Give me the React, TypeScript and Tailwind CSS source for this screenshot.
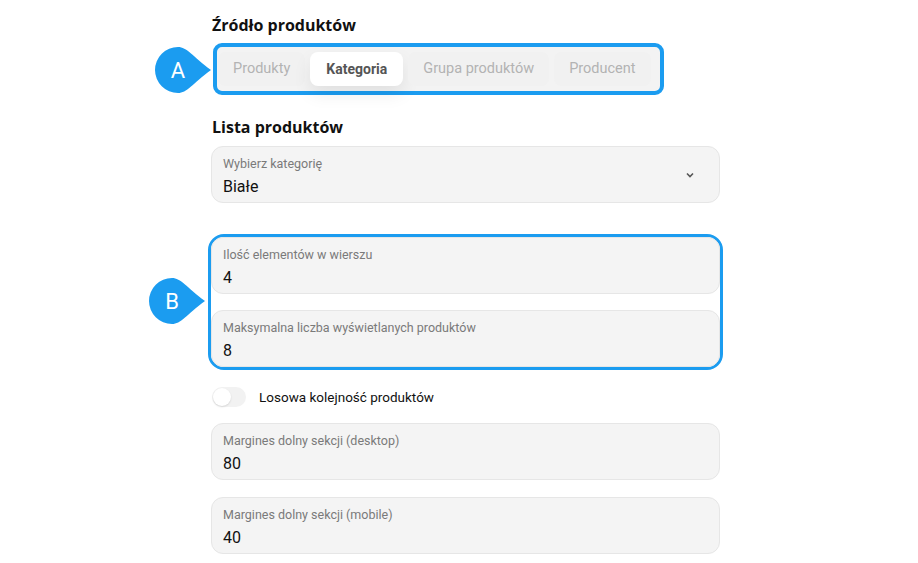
import type { ReactNode } from 'react'

const font = { fontFamily: 'Roboto, "Liberation Sans", sans-serif' }
const headingFont = { fontFamily: '"Open Sans", "Liberation Sans", sans-serif' }

function Badge({ letter }: { letter: string }) {
  return (
    <div className="relative h-[46px] w-[56px]">
      <svg width="56" height="46" viewBox="0 0 56 46" className="absolute inset-0">
        <path
          d="M23 0 C32 0 37 9 56 23 C37 37 32 46 23 46 A23 23 0 0 1 23 0 Z"
          fill="#1b9cf0"
        />
      </svg>
      <span className="absolute left-0 top-0 flex h-[46px] w-[46px] items-center justify-center text-[22px] text-white">
        {letter}
      </span>
    </div>
  )
}

function Field({ label, value, children }: { label: string; value: string; children?: ReactNode }) {
  return (
    <div className="flex h-[57px] items-start rounded-[12px] border border-[#e6e6e6] bg-[#f4f4f4] pl-[11px] pr-3 pt-[9px]">
      <div className="flex-1">
        <div className="text-[12.5px] leading-[16px] text-[#7a7a7a]">{label}</div>
        <div className="mt-[5px] text-[16px] leading-[20px] text-[#111]">{value}</div>
      </div>
      {children}
    </div>
  )
}

export default function App() {
  const tabs = ['Produkty', 'Kategoria', 'Grupa produktów', 'Producent']

  return (
    <div className="min-h-[563px] bg-white" style={font}>
      <div className="ml-[211px] w-[509px] pt-[15px]">
        <h2 className="pl-px text-[16px] font-bold leading-[20px] text-[#111]" style={headingFont}>
          Źródło produktów
        </h2>

        {/* Tabs with marker A */}
        <div className="relative mt-[8px]">
          <div className="absolute left-[-56px] top-[4px]">
            <Badge letter="A" />
          </div>
          <div className="ml-[2px] inline-flex h-[52px] w-[451px] items-center gap-[5px] rounded-[9px] border-4 border-[#1b9cf0] bg-[#f3f3f3] px-[1px]">
            {tabs.map((t) => (
              <div
                key={t}
                className={
                  t === 'Kategoria'
                    ? 'flex h-[34px] items-center rounded-[8px] bg-white px-[16px] text-[14px] font-bold text-[#555] shadow-[0_8px_18px_rgba(0,0,0,0.08)]'
                    : 'flex h-[34px] items-center rounded-[8px] bg-[#f1f1f1] px-[15px] text-[14.5px] text-[#b3b3b3]'
                }
              >
                {t}
              </div>
            ))}
          </div>
        </div>

        <h2 className="mt-[22px] pl-px text-[16px] font-bold leading-[20px] text-[#111]" style={headingFont}>
          Lista produktów
        </h2>

        <div className="mt-[9px]">
          <Field label="Wybierz kategorię" value="Białe">
            <svg width="10" height="6" viewBox="0 0 10 6" className="mr-[12px] mt-[16px]">
              <path d="M2 1.5 L5 4.5 L8 1.5" stroke="#555" strokeWidth="1.6" fill="none" />
            </svg>
          </Field>
        </div>

        {/* Group with marker B */}
        <div className="relative mt-[31px]">
          <div className="absolute left-[-62px] top-[44px]">
            <Badge letter="B" />
          </div>
          <div className="-mx-[3px] flex flex-col gap-[16px] rounded-[16px] border-[3px] border-[#1b9cf0]">
            <Field label="Ilość elementów w wierszu" value="4" />
            <Field label="Maksymalna liczba wyświetlanych produktów" value="8" />
          </div>
        </div>

        <div className="mt-[17px] flex items-center gap-[13px] pl-px">
          <div className="flex h-[20px] w-[34px] items-center rounded-full bg-[#f2f2f2] px-[1px]">
            <div className="h-[18px] w-[18px] rounded-full bg-white shadow-[0_1px_2px_rgba(0,0,0,0.12)]" />
          </div>
          <span className="text-[13.5px] text-[#111]">Losowa kolejność produktów</span>
        </div>

        <div className="mt-[16px] flex flex-col gap-[17px]">
          <Field label="Margines dolny sekcji (desktop)" value="80" />
          <Field label="Margines dolny sekcji (mobile)" value="40" />
        </div>
      </div>
    </div>
  )
}
